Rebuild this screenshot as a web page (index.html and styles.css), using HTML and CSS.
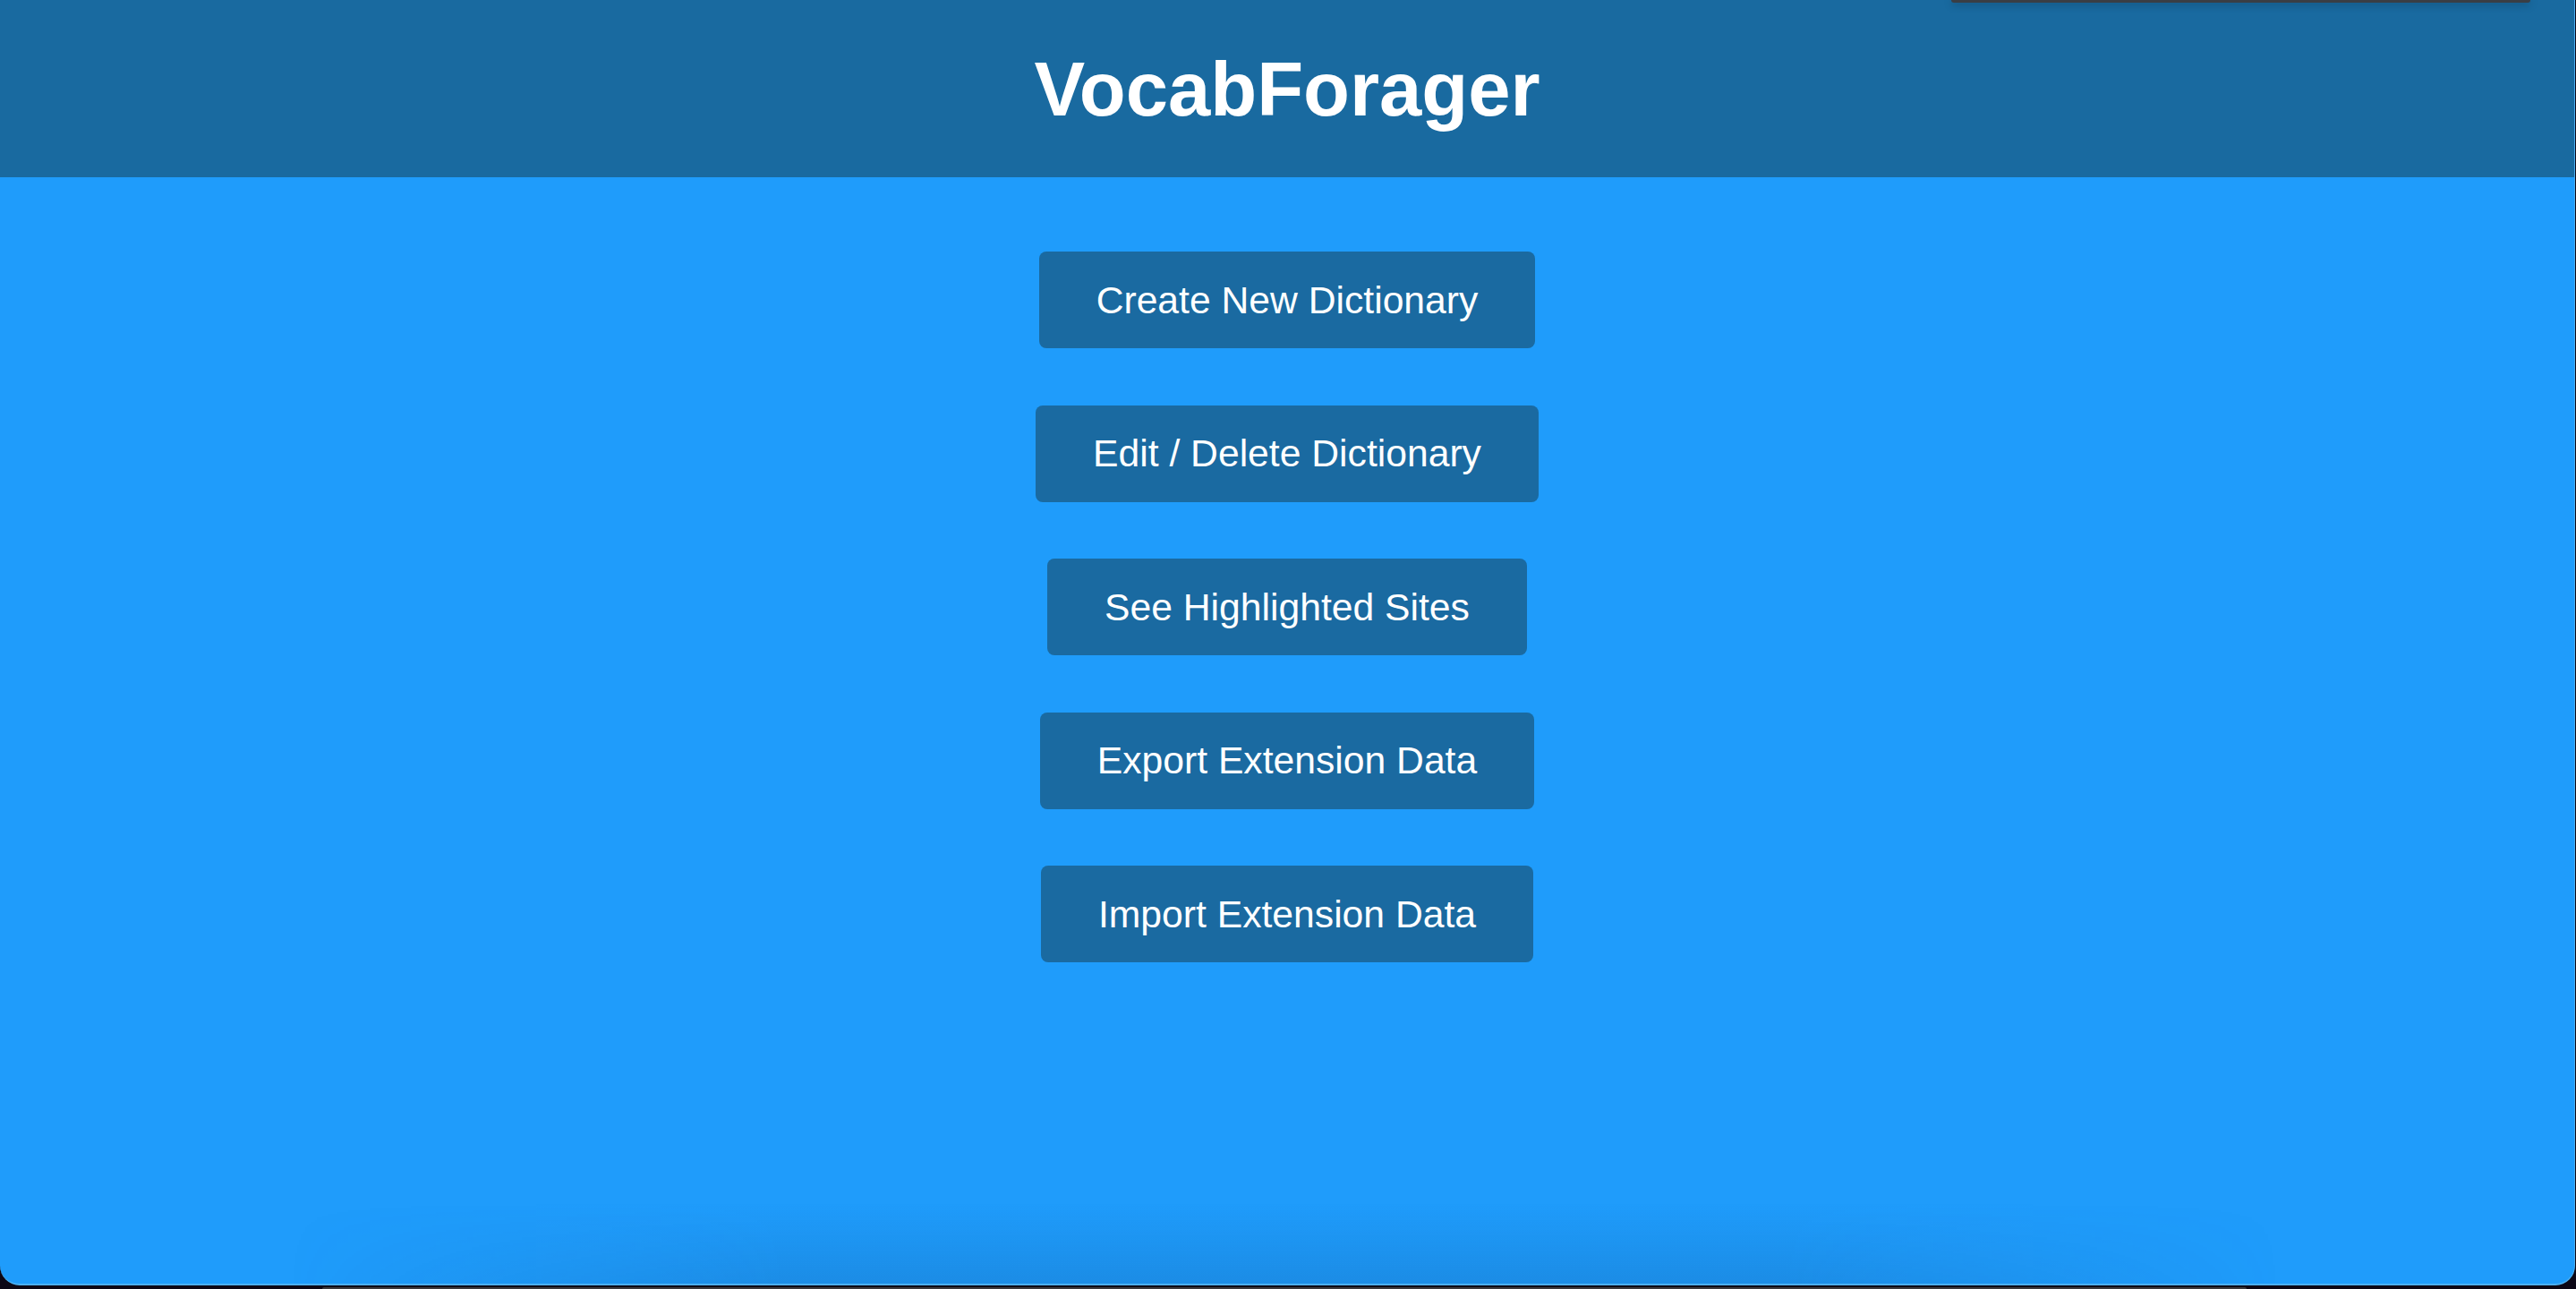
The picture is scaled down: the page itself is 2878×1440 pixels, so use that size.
FILE: index.html
```html
<!DOCTYPE html>
<html lang="en">
<head>
<meta charset="utf-8">
<title>VocabForager</title>
<link rel="stylesheet" href="styles.css">
</head>
<body>
<div class="window">
  <div class="topbar"></div>
  <header class="header">
    <h1 class="title">VocabForager</h1>
  </header>
  <main class="menu">
    <button class="btn">Create New Dictionary</button>
    <button class="btn">Edit / Delete Dictionary</button>
    <button class="btn">See Highlighted Sites</button>
    <button class="btn">Export Extension Data</button>
    <button class="btn">Import Extension Data</button>
  </main>
  <div class="dock-shadow"></div>
</div>
<div class="dock"></div>
</body>
</html>
```

FILE: styles.css
```css
html, body {
  margin: 0;
  padding: 0;
}
body {
  background: #0c0716;
  width: 2878px;
  height: 1440px;
  overflow: hidden;
  font-family: "Liberation Sans", Arial, sans-serif;
}
.window {
  position: relative;
  width: 2876px;
  height: 1434px;
  background: #1f9cfb;
  border-right: 1px solid #4aaef0;
  border-bottom: 2px solid #4bb0f2;
  border-radius: 0 0 22px 22px;
  overflow: hidden;
  display: flex;
  flex-direction: column;
}
.topbar {
  position: absolute;
  top: 0;
  left: 2180px;
  width: 647px;
  height: 3px;
  background: #3a3e45;
  border-radius: 0 0 8px 8px;
  box-shadow: 0 2px 8px rgba(0, 0, 0, 0.35);
}
.header {
  height: 198px;
  flex: none;
  background: #196aa0;
  display: flex;
  align-items: center;
  justify-content: center;
}
.title {
  margin: 0;
  color: #ffffff;
  font-size: 85px;
  line-height: 85px;
  font-weight: 700;
}
.menu {
  display: flex;
  flex-direction: column;
  align-items: center;
  gap: 63.5px;
  padding-top: 83px;
}
.btn {
  font-family: "Liberation Sans", Arial, sans-serif;
  font-size: 42.67px;
  line-height: 49px;
  color: #ffffff;
  background: #1a6aa1;
  border: none;
  border-radius: 8px;
  padding: 29.5px 64px;
  margin: 0;
  cursor: pointer;
}
.dock-shadow {
  position: absolute;
  left: 320px;
  width: 2230px;
  bottom: 0;
  height: 90px;
  background: linear-gradient(to bottom, rgba(10, 60, 120, 0) 0%, rgba(10, 60, 120, 0.16) 100%);
  -webkit-mask-image: linear-gradient(to right, transparent 0%, #000 25%, #000 75%, transparent 100%);
  mask-image: linear-gradient(to right, transparent 0%, #000 25%, #000 75%, transparent 100%);
  pointer-events: none;
}
.dock {
  margin: 2px 0 0 360px;
  width: 2150px;
  height: 2px;
  background: #3a393d;
  border-radius: 4px 4px 0 0;
}
```
